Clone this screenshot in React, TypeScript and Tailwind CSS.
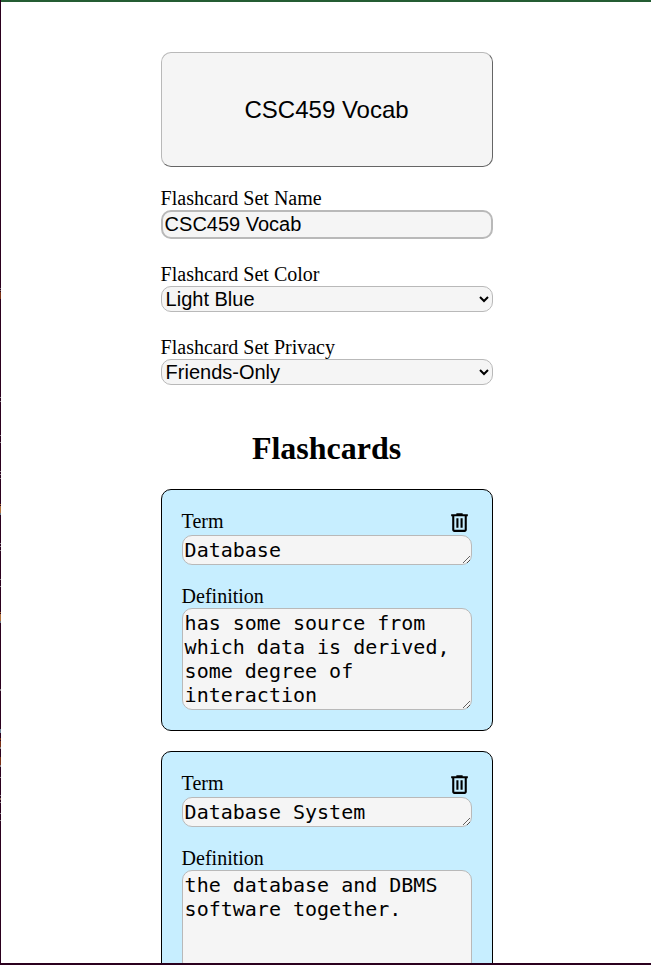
const SERIF = "font-['Liberation_Serif',serif]";

type Card = { term: string; definition: string };

const cards: Card[] = [
  {
    term: 'Database',
    definition: 'has some source from which data is derived, some degree of interaction',
  },
  { term: 'Database System', definition: 'the database and DBMS software together.' },
];

// Coloured slivers of the window behind, visible along the left edge.
const slivers: [number, number, string][] = [
  [288, 1, '#7a6a78'],
  [290, 1, '#8d6a60'],
  [292, 7, '#7a3015'],
  [397, 1, '#8b8389'],
  [401, 1, '#8b8389'],
  [435, 1, '#8b8389'],
  [442, 1, '#8b8389'],
  [471, 1, '#8b8389'],
  [474, 1, '#8b8389'],
  [478, 1, '#8b8389'],
  [504, 1, '#a4642f'],
  [506, 7, '#b0703c'],
  [513, 2, '#6d7780'],
  [543, 1, '#8b8389'],
  [546, 1, '#8b8389'],
  [550, 1, '#8b8389'],
  [579, 1, '#8b8389'],
  [586, 1, '#8b8389'],
  [612, 1, '#a4642f'],
  [614, 7, '#b0703c'],
  [621, 2, '#6d7780'],
  [689, 2, '#8b8389'],
  [729, 4, '#71889b'],
  [738, 2, '#7a3015'],
  [741, 6, '#7a3015'],
  [747, 2, '#8b8389'],
  [757, 2, '#7a3015'],
  [759, 6, '#7a3015'],
  [765, 2, '#8b8389'],
  [777, 1, '#8b8389'],
  [795, 1, '#8b8389'],
  [798, 2, '#8b6a60'],
  [802, 1, '#8b8389'],
  [813, 1, '#8b8389'],
  [820, 1, '#8b8389'],
];

function TrashIcon() {
  return (
    <svg viewBox="0 -960 960 960" className="size-[25px]" fill="#000000">
      <path d="M280-120q-33 0-56.5-23.5T200-200v-520h-40v-80h200v-40h240v40h200v80h-40v520q0 33-23.5 56.5T680-120H280Zm400-600H280v520h400v-520ZM360-280h80v-360h-80v360Zm160 0h80v-360h-80v360Z" />
    </svg>
  );
}

function SelectField({ label, value, className }: { label: string; value: string; className: string }) {
  return (
    <label className={`flex flex-col ${className}`}>
      <span className="h-[23px] leading-[23px]">{label}</span>
      <select
        defaultValue={value}
        className="h-[26px] w-full appearance-auto rounded-[10px] border border-[#b9b9b9] bg-[#f5f5f5] font-['Liberation_Sans',sans-serif] text-[20px] leading-normal text-black"
      >
        <option>{value}</option>
      </select>
    </label>
  );
}

function Flashcard({ term, definition }: Card) {
  const area =
    "block w-full rounded-[10px] border border-[#b9b9b9] bg-[#f5f5f5] p-[2px] font-['DejaVu_Sans_Mono',monospace] text-[20px] leading-[24px] text-black resize overflow-hidden";
  return (
    <section className="h-[242px] w-full shrink-0 rounded-[10px] border border-black bg-[#c7eeff] p-5">
      <div className="flex h-[25px] items-start justify-between">
        <span className="leading-[23px]">Term</span>
        <button type="button" aria-label="Delete card">
          <TrashIcon />
        </button>
      </div>
      <textarea spellCheck={false} defaultValue={term} className={`h-[30px] ${area}`} />
      <div className="mt-5 h-[23px] leading-[23px]">Definition</div>
      <textarea spellCheck={false} defaultValue={definition} className={`h-[102px] ${area}`} />
    </section>
  );
}

export default function App() {
  return (
    <div
      className={`relative flex h-[965px] w-[651px] flex-col overflow-hidden border-b-2 border-[#2b001e] bg-white text-[20px] text-black ${SERIF}`}
    >
      <div className="h-[2px] w-full shrink-0 bg-[#245c33]" />
      <div className="absolute left-0 top-0 h-[965px] w-px bg-[#2b001e]">
        {slivers.map(([top, height, color]) => (
          <i key={top} className="absolute left-0 w-px" style={{ top, height, background: color }} />
        ))}
      </div>

      <main className="ml-[160.6px] mt-[50px] flex min-h-0 w-[332px] flex-1 flex-col">
        <button
          type="button"
          className="h-[115px] w-full shrink-0 rounded-[10px] border border-t-[#b9b9b9] border-l-[#b9b9b9] border-r-[#656565] border-b-[#656565] bg-[#f5f5f5] font-['Liberation_Sans',sans-serif] text-[24px] leading-[27px]"
        >
          CSC459 Vocab
        </button>

        <label className="mt-5 flex flex-col">
          <span className="h-[23px] leading-[23px]">Flashcard Set Name</span>
          <input
            defaultValue="CSC459 Vocab"
            className="h-[29px] w-full rounded-[10px] border-2 border-[#b9b9b9] bg-[#f5f5f5] px-[2px] py-px font-['Liberation_Sans',sans-serif] text-[20px] leading-[23px]"
          />
        </label>
        <SelectField label="Flashcard Set Color" value="Light Blue" className="mt-6" />
        <SelectField label="Flashcard Set Privacy" value="Friends-Only" className="mt-6" />

        <h1 className="mt-[45px] h-[37px] shrink-0 text-center text-[32px] font-bold leading-[37px]">
          Flashcards
        </h1>

        <div className="mt-[22px] flex flex-col gap-5">
          {cards.map((card) => (
            <Flashcard key={card.term} {...card} />
          ))}
        </div>
      </main>
    </div>
  );
}
